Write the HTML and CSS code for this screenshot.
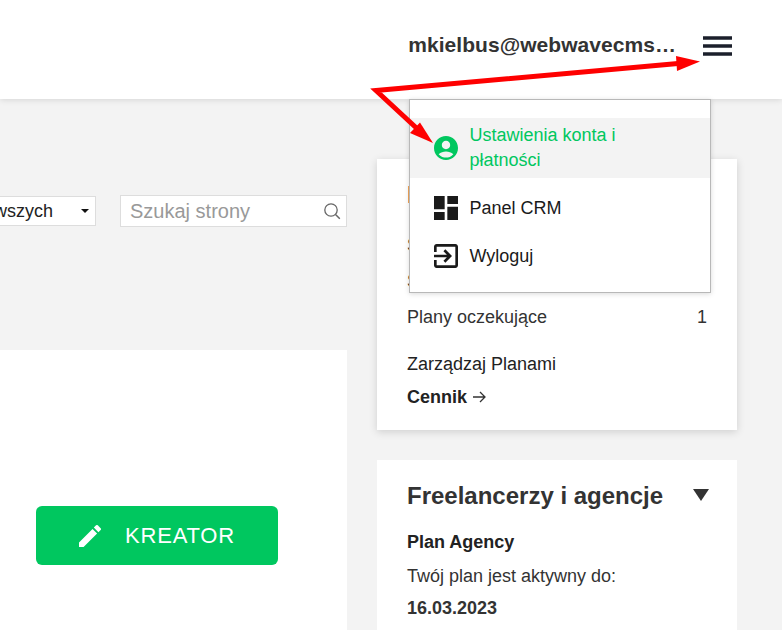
FILE: index.html
```html
<!DOCTYPE html>
<html lang="pl">
<head>
<meta charset="utf-8">
<title>Panel</title>
<link rel="stylesheet" href="styles.css">
</head>
<body>
<header class="topbar">
  <span class="email">mkielbus@webwavecms…</span>
  <button class="burger" aria-label="Menu">
    <svg width="29" height="20" viewBox="0 0 29 20"><path d="M0 2h29M0 10h29M0 18h29" stroke="#1b1f2b" stroke-width="3.400" fill="none"/></svg>
  </button>
</header>
<main class="content">
  <section class="left">
    <div class="filters">
      <div class="select"><span>Od najnowszych</span><i class="caret"></i></div>
      <div class="search">
        <span>Szukaj strony</span>
        <svg width="18" height="18" viewBox="0 0 18 18"><circle cx="8" cy="8" r="6.2" fill="none" stroke="#666" stroke-width="1.3"/><path d="M12.5 12.5l4.3 4.3" stroke="#666" stroke-width="1.5"/></svg>
      </div>
    </div>
    <div class="panel">
      <a class="cta">
        <svg width="22" height="22" viewBox="3 3 18 18"><path fill="#fff" d="M3 17.25V21h3.75L17.81 9.94l-3.75-3.75L3 17.25zM20.71 7.04a1 1 0 0 0 0-1.41l-2.34-2.34a1 1 0 0 0-1.41 0l-1.83 1.83 3.75 3.75 1.83-1.83z"/></svg>
        <span>KREATOR</span>
      </a>
    </div>
  </section>
  <aside class="right">
    <section class="card plans">
      <div class="badge"></div>
      <div class="row first"><span>Strony</span><span>1</span></div>
      <div class="row"><span>Sklepy</span><span>0</span></div>
      <div class="row"><span>Plany oczekujące</span><span>1</span></div>
      <p class="manage">Zarządzaj Planami</p>
      <p class="pricing"><b>Cennik</b>
        <svg class="go" width="13" height="12" viewBox="0 0 13 12"><path d="M0 6h12M7 1l5 5-5 5" fill="none" stroke="#333" stroke-width="1.300"/></svg>
      </p>
    </section>
    <section class="card agency">
      <div class="agency-head"><h2>Freelancerzy i agencje</h2><i class="tri"></i></div>
      <p class="plan-name">Plan Agency</p>
      <p class="plan-text">Twój plan jest aktywny do:</p>
      <p class="plan-date">16.03.2023</p>
    </section>
  </aside>
</main>
<nav class="menu">
  <a class="item active">
    <svg width="24" height="24" viewBox="2 2 20 20"><path fill="#00c75f" d="M12 2C6.48 2 2 6.48 2 12s4.48 10 10 10 10-4.48 10-10S17.52 2 12 2zm0 4c1.93 0 3.5 1.57 3.5 3.5S13.93 13 12 13s-3.5-1.57-3.5-3.5S10.07 6 12 6zm0 14c-2.03 0-4.43-.82-6.14-2.88C7.55 15.8 9.68 15 12 15s4.45.8 6.14 2.12C16.43 19.18 14.03 20 12 20z"/></svg>
    <span>Ustawienia konta i płatności</span>
  </a>
  <a class="item">
    <svg width="24" height="24" viewBox="3 3 18 18"><path fill="#1a1a1a" d="M3 13h8V3H3v10zm0 8h8v-6H3v6zm10 0h8V11h-8v10zm0-18v6h8V3h-8z"/></svg>
    <span>Panel CRM</span>
  </a>
  <a class="item">
    <svg width="24" height="24" viewBox="3 3 18 18"><path fill="#1a1a1a" d="M10.09 15.59L11.5 17l5-5-5-5-1.41 1.41L12.67 11H3v2h9.67l-2.58 2.59zM19 3H5c-1.11 0-2 .9-2 2v4h2V5h14v14H5v-4H3v4c0 1.1.89 2 2 2h14c1.1 0 2-.9 2-2V5c0-1.1-.9-2-2-2z"/></svg>
    <span>Wyloguj</span>
  </a>
</nav>
<svg class="arrows" width="782" height="630" viewBox="0 0 782 630">
  <path d="M678 63.5L376 90.500L424 135" fill="none" stroke="#fe0000" stroke-width="5"/>
  <path d="M676 56L700 61.5L677 71z" fill="#fe0000"/>
  <path d="M410 133L420 122.500L433 143z" fill="#fe0000"/>
</svg>
</body>
</html>
```
FILE: styles.css
```css
* { box-sizing: border-box; }
html, body { margin: 0; height: 630px; overflow: hidden; }
body { background: #f3f3f3; font-family: "Liberation Sans", Arial, sans-serif; color: #333; font-size: 18px; position: relative; }
p, h2 { margin: 0; }

.topbar { height: 99px; background: #fff; box-shadow: 0 1px 6px rgba(0,0,0,.12); display: flex; align-items: center; justify-content: flex-end; padding: 0 50px 9px 0; gap: 27px; }
.email { font-weight: 700; font-size: 21px; letter-spacing: .05px; color: #333; }
.burger { border: 0; padding: 0; background: none; display: block; width: 29px; height: 20px; margin-top: 1px; }
.burger svg { display: block; }

.content { display: flex; gap: 30px; align-items: flex-start; padding-top: 60px; }
.left { width: 347px; flex: none; }
.filters { display: flex; justify-content: flex-end; align-items: center; gap: 24px; padding-top: 36px; height: 68px; }
.select { flex: none; width: 191px; height: 30px; background: #fff; border: 1px solid #ddd; display: flex; align-items: center; justify-content: space-between; padding: 0 6px 0 15px; font-size: 18px; color: #222; white-space: nowrap; }
.caret { width: 0; height: 0; border: 4.500px solid transparent; border-top: 4.500px solid #111; border-bottom: 0; }
.search { flex: none; width: 227px; height: 32px; background: #fff; border: 1px solid #ddd; display: flex; align-items: center; justify-content: space-between; padding: 0 5px 0 9px; font-size: 20px; color: #999; }
.panel { margin-top: 123px; height: 300px; background: #fff; padding: 156px 0 0 36px; }
.cta { width: 242px; height: 59px; background: #00c75f; border-radius: 6px; display: flex; align-items: center; justify-content: center; gap: 24px; color: #fff; font-size: 22px; letter-spacing: .8px; }

.right { width: 360px; flex: none; display: flex; flex-direction: column; gap: 30px; }
.card { background: #fff; padding: 24px 30px 0 30px; }
.plans { height: 271px; box-shadow: 0 2px 8px rgba(0,0,0,.15); }
.badge { height: 17px; margin: 3px 0 0 1px; background: #f2a65a; }
.row { display: flex; justify-content: space-between; height: 36px; line-height: 36px; }
.first { margin-top: 24px; }
.manage { margin-top: 17px; line-height: 24px; color: #222; }
.pricing { margin-top: 9px; line-height: 24px; color: #222; font-size: 18px; display: flex; align-items: center; gap: 6px; }
.go { display: block; }
.agency { height: 200px; padding-top: 20px; }
.agency-head { display: flex; justify-content: space-between; align-items: center; height: 32px; }
.agency-head h2 { font-size: 24px; font-weight: 700; color: #333; white-space: nowrap; }
.tri { width: 0; height: 0; border: 8.500px solid transparent; border-top: 12px solid #333; border-bottom: 0; margin: -2px -2px 0 0; }
.plan-name { margin-top: 18px; font-weight: 700; line-height: 24px; color: #222; }
.plan-text { margin-top: 10px; line-height: 24px; }
.plan-date { margin-top: 8px; font-weight: 700; line-height: 24px; }

.menu { position: absolute; left: 409px; top: 99px; width: 302px; height: 194px; background: #fff; border: 1px solid #b8b8b8; box-shadow: 0 1px 5px rgba(0,0,0,.15); padding-top: 18px; }
.item { display: flex; align-items: center; gap: 11.500px; height: 48px; padding-left: 24px; color: #1a1a1a; font-size: 18px; line-height: 25px; }
.item span { width: 190px; }
.item.active { height: 60px; background: #f3f3f3; color: #00c75f; margin-bottom: 6px; }
.arrows { position: absolute; left: 0; top: 0; pointer-events: none; }
```
